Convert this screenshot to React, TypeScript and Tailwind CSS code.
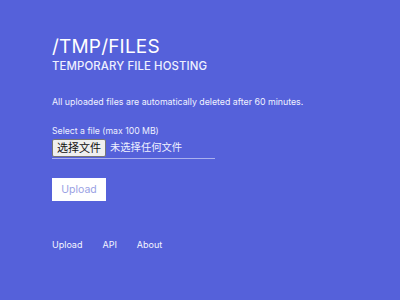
export default function App() {
  return (
    <div
      className="w-[400px] h-[300px] bg-[#5561da] text-white px-[52px] pt-[35px] overflow-hidden"
      style={{ fontFamily: "Inter, 'Noto Sans CJK SC', sans-serif" }}
    >
      <h1 className="text-[19px] leading-[24px] font-normal tracking-[0.01em]">/TMP/FILES</h1>
      <h2 className="text-[11.4px] leading-[14px] font-medium text-[#eef0ff] tracking-[0.01em]">TEMPORARY FILE HOSTING</h2>

      <p className="mt-[23px] text-[8.8px] leading-[12px] text-[#f0f1ff]">
        All uploaded files are automatically deleted after 60 minutes.
      </p>

      <div className="mt-[18px]">
        <div className="text-[8.7px] leading-[11px] text-[#eef0ff]">Select a file (max 100 MB)</div>
        <div className="mt-[2px] w-[163px] flex items-center gap-[4px] border-b border-[#aab0ee] pb-[1px]">
          <span className="h-[18px] px-[4px] flex items-center bg-[#efefef] border border-[#767676] rounded-[2px] text-[11px] text-[#111]">
            选择文件
          </span>
          <span className="text-[10.3px] text-[#eef0ff]">未选择任何文件</span>
        </div>
      </div>

      <button
        type="button"
        className="mt-[19px] w-[54px] h-[23px] bg-white text-[#9aa1e4] text-[10.5px] flex items-center justify-center"
      >
        Upload
      </button>

      <nav className="mt-[37px] flex gap-[20px] text-[9px] text-[#f4f5ff]">
        <span>Upload</span>
        <span>API</span>
        <span>About</span>
      </nav>
    </div>
  );
}
